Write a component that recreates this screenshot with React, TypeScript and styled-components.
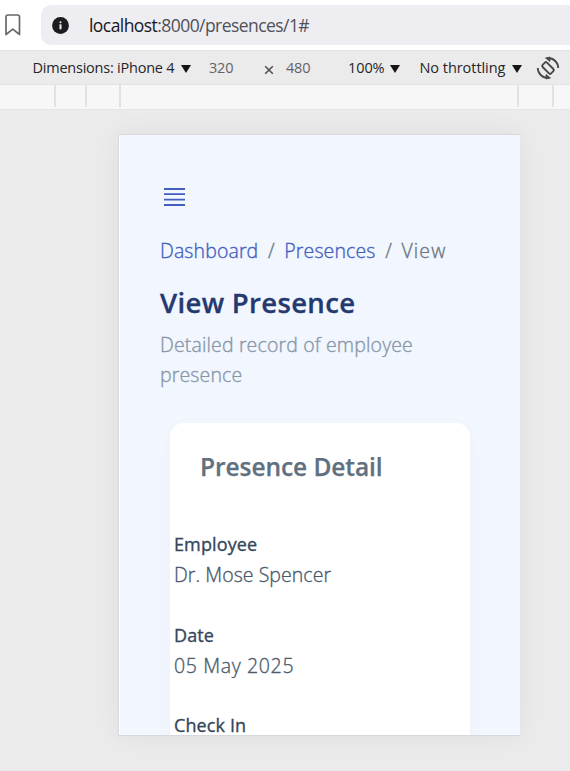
import React from "react";
import styled, { createGlobalStyle } from "styled-components";

const Global = createGlobalStyle`
  * { box-sizing: border-box; }
  html, body { margin: 0; background: #ebebeb; overflow: hidden; }
  body { font-family: "Open Sans", "Noto Sans", sans-serif; }
`;

const Browser = styled.div`
  width: 570px;
  height: 771px;
  display: flex;
  flex-direction: column;
  overflow: hidden;
  background: #ebebeb;
`;

const UrlBar = styled.header`
  flex: none;
  height: 50px;
  display: flex;
  align-items: center;
  gap: 20px;
  padding-left: 5px;
  background: #fff;
  svg { display: block; flex: none; }
`;

const UrlField = styled.div`
  flex: 1;
  height: 40px;
  display: flex;
  align-items: center;
  gap: 20px;
  padding-left: 11px;
  border-radius: 10px 0 0 10px;
  background: #ededf2;
`;

const Url = styled.span`
  font-size: 17.5px;
  line-height: 24px;
  letter-spacing: -0.56px;
  white-space: nowrap;
  color: #515157;
`;

const Host = styled.span`
  color: #17171b;
`;

const DeviceToolbar = styled.div`
  flex: none;
  height: 35px;
  display: flex;
  align-items: center;
  padding-left: 32.5px;
  border-top: 1px solid #e1e1e6;
  border-bottom: 1px solid #e1e1e8;
  background: #ebebeb;
`;

const ToolLabel = styled.span<{ $width: number; $muted?: boolean; $spacing?: number }>`
  flex: none;
  width: ${p => p.$width}px;
  font-size: 14.5px;
  line-height: 20px;
  letter-spacing: ${p => p.$spacing ?? 0}px;
  white-space: nowrap;
  color: ${p => (p.$muted ? "#646468" : "#26262a")};
`;

const Caret = styled.span<{ $gap: number }>`
  flex: none;
  margin: 3px ${p => p.$gap}px 0 0;
  border: 5px solid transparent;
  border-top: 8px solid #151518;
  border-bottom: 0;
`;

const Times = styled.svg`
  flex: none;
  margin: 5px 12px 0 0;
`;

const RotateIcon = styled.svg`
  flex: none;
`;

const Ruler = styled.div`
  flex: none;
  height: 25px;
  display: flex;
  border-bottom: 1px solid #e5e5e8;
  background: #f7f7f7;
`;

const Tick = styled.span<{ $before: number }>`
  flex: none;
  width: 2px;
  height: 22px;
  margin-left: ${p => p.$before}px;
  background: #e1e1e9;
`;

const Stage = styled.main`
  flex: 1;
  padding: 24px 0 0 118px;
`;

const Device = styled.section`
  width: 402px;
  height: 602px;
  overflow: hidden;
  padding: 52px 41px 0;
  border: 1px solid #d8d9dd;
  border-right: 0;
  background: #f1f6ff;
  box-shadow: 0 0 24px rgba(0, 0, 0, 0.06), inset 1px 0 #fff;
`;

const MenuIcon = styled.svg`
  display: block;
  margin-left: 3px;
`;

const Breadcrumb = styled.nav`
  display: flex;
  margin-top: 30px;
  font-size: 19.5px;
  line-height: 30px;
  font-weight: 300;
  -webkit-text-stroke: 0.35px;
  white-space: nowrap;
`;

const Crumb = styled.span<{ $link?: boolean; $spacing?: number }>`
  letter-spacing: ${p => p.$spacing ?? 0.12}px;
  color: ${p => (p.$link ? "#435ebe" : "#6c757d")};
`;

const Slash = styled.span`
  width: 26px;
  text-align: center;
  color: #6c757d;
`;

const Title = styled.h1`
  margin: 19px 0 0;
  font-size: 27.5px;
  line-height: 36px;
  font-weight: 600;
  letter-spacing: 0.33px;
  -webkit-text-stroke: 0.3px;
  color: #25396f;
`;

const Subtitle = styled.p`
  margin: 9px 0 0;
  font-size: 19.5px;
  line-height: 30px;
  font-weight: 300;
  letter-spacing: 0.15px;
  -webkit-text-stroke: 0.35px;
  color: #8796a6;
`;

const Card = styled.article`
  width: 300px;
  height: 400px;
  margin: 33px 0 0 10px;
  border-radius: 14px;
  background: #fff;
  box-shadow: 0 5px 20px rgba(25, 42, 70, 0.025);
`;

const CardTitle = styled.h2`
  margin: 0;
  padding: 29px 30px 0;
  font-size: 24.5px;
  line-height: 30px;
  font-weight: 600;
  letter-spacing: -0.07px;
  -webkit-text-stroke: 0.25px;
  color: #607080;
`;

const Fields = styled.dl`
  display: grid;
  gap: 30px;
  margin: 47px 0 0;
  padding-left: 4px;
`;

const Field = styled.div`
  height: 60.5px;
`;

const Label = styled.dt`
  font-size: 18px;
  line-height: 30px;
  font-weight: 500;
  letter-spacing: 0.12px;
  -webkit-text-stroke: 0.35px;
  color: #34475b;
`;

const Value = styled.dd<{ $spacing: number }>`
  margin: 0;
  font-size: 19.5px;
  line-height: 31px;
  font-weight: 300;
  letter-spacing: ${p => p.$spacing}px;
  -webkit-text-stroke: 0.35px;
  color: #4a5b6d;
`;

const fields = [
  { label: "Employee", value: "Dr. Mose Spencer", spacing: 0.05 },
  { label: "Date", value: "05 May 2025", spacing: 0.65 },
  { label: "Check In", value: "", spacing: 0 },
];

export default function App() {
  return (
    <Browser>
      <Global />
      <UrlBar>
        <svg width="16" height="22" viewBox="0 0 16 22" fill="none" stroke="#67676c" strokeWidth="1.7" strokeLinejoin="round">
          <path d="M1 3Q1 1 3 1H12.500Q14.500 1 14.500 3V20.500L7.800 15.200L1 20.500Z" />
        </svg>
        <UrlField>
          <svg width="17" height="17" viewBox="0 0 17 17">
            <circle cx="8.500" cy="8.500" r="8.400" fill="#1b1b20" />
            <rect x="7.500" y="7.300" width="2" height="5" fill="#ededf2" />
            <rect x="7.500" y="4.300" width="2" height="2" rx="1" fill="#ededf2" />
          </svg>
          <Url><Host>localhost</Host>:8000/presences/1#</Url>
        </UrlField>
      </UrlBar>
      <DeviceToolbar>
        <ToolLabel $width={148.5} $spacing={-0.23}>Dimensions: iPhone 4</ToolLabel>
        <Caret $gap={18} />
        <ToolLabel $width={55} $muted $spacing={-0.2}>320</ToolLabel>
        <Times width="10" height="10" viewBox="0 0 10 10" stroke="#4c4c50" strokeWidth="1.500">
          <path d="M1.200 1.200L8.800 8.800M8.800 1.200L1.200 8.800" />
        </Times>
        <ToolLabel $width={62} $muted $spacing={-0.2}>480</ToolLabel>
        <ToolLabel $width={42} $spacing={-0.1}>100%</ToolLabel>
        <Caret $gap={19.5} />
        <ToolLabel $width={92.5} $spacing={-0.05}>No throttling</ToolLabel>
        <Caret $gap={14} />
        <RotateIcon width="24" height="24" viewBox="0 0 24 24" fill="none" stroke="#47474b" strokeWidth="1.900">
          <rect x="8.900" y="6" width="6.200" height="12" rx="1.500" transform="rotate(-45 12 12)" />
          <path d="M1.700 12A10.300 10.300 0 0 0 11 22M22.300 12A10.300 10.300 0 0 0 13 2" />
          <path d="M10 18.500L14.500 22L10 23ZM14 5.500L9.500 2L14 1Z" fill="#47474b" strokeWidth="0.800" />
        </RotateIcon>
      </DeviceToolbar>
      <Ruler>
        <Tick $before={54} />
        <Tick $before={29} />
        <Tick $before={32} />
        <Tick $before={396} />
        <Tick $before={33} />
      </Ruler>
      <Stage>
        <Device>
          <MenuIcon width="23" height="19" viewBox="0 0 23 19" stroke="#435ebe" strokeWidth="1.800">
            <path d="M1 2H22M1 7.200H22M1 12.600H22M1 18H22" />
          </MenuIcon>
          <Breadcrumb>
            <Crumb $link>Dashboard</Crumb>
            <Slash>/</Slash>
            <Crumb $link>Presences</Crumb>
            <Slash>/</Slash>
            <Crumb $spacing={1.1}>View</Crumb>
          </Breadcrumb>
          <Title>View Presence</Title>
          <Subtitle>Detailed record of employee presence</Subtitle>
          <Card>
            <CardTitle>Presence Detail</CardTitle>
            <Fields>
              {fields.map(f => (
                <Field key={f.label}>
                  <Label>{f.label}</Label>
                  {f.value && <Value $spacing={f.spacing}>{f.value}</Value>}
                </Field>
              ))}
            </Fields>
          </Card>
        </Device>
      </Stage>
    </Browser>
  );
}
